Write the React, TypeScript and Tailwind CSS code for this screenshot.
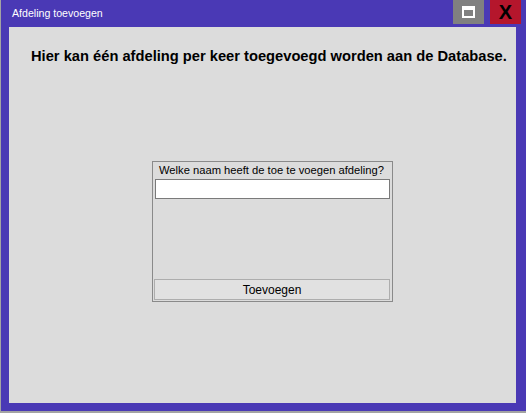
import React from "react";

export default function App() {
  return (
    <div className="w-[526px] h-[413px] bg-[#a3a3a3] font-['Liberation_Sans',Arial,sans-serif]">
      <div className="ml-px w-[525px] h-[411px] bg-[#4a39b5] flex flex-col">
        <div className="h-[27px] flex items-start">
          <span className="pl-[11px] pt-[7px] text-[10.6px] leading-[13px] text-white">
            Afdeling toevoegen
          </span>
          <div className="ml-auto flex gap-[6px] pr-[5px]">
            <button className="w-[31px] h-[24px] bg-[#808080] flex items-center justify-center">
              <span className="block w-[13px] h-[12px] border-2 border-t-[4px] border-white" />
            </button>
            <button className="w-[31px] h-[24px] bg-[#b5162c] flex items-center justify-center text-black font-bold text-[20px] leading-none">
              X
            </button>
          </div>
        </div>
        <div className="ml-[8px] w-[507px] h-[376px] bg-[#dcdcdc] flex flex-col">
          <p className="mt-[21px] pl-[22px] text-[14.7px] leading-[16px] font-bold text-black whitespace-nowrap">
            Hier kan één afdeling per keer toegevoegd worden aan de Database.
          </p>
          <div className="mt-[97px] ml-[143px] w-[241px] h-[141px] border border-[#8a8a8a] flex flex-col px-[2px] pb-[1px]">
            <span className="pl-[4px] pt-px text-[11.2px] leading-[14px] text-black whitespace-nowrap">
              Welke naam heeft de toe te voegen afdeling?
            </span>
            <input className="mt-[2px] h-[20px] border border-[#7a7a7a] bg-white outline-none" />
            <button className="mt-auto -ml-px h-[21px] border border-[#adadad] bg-[#e1e1e1] text-[12px] text-black">
              Toevoegen
            </button>
          </div>
        </div>
      </div>
    </div>
  );
}
